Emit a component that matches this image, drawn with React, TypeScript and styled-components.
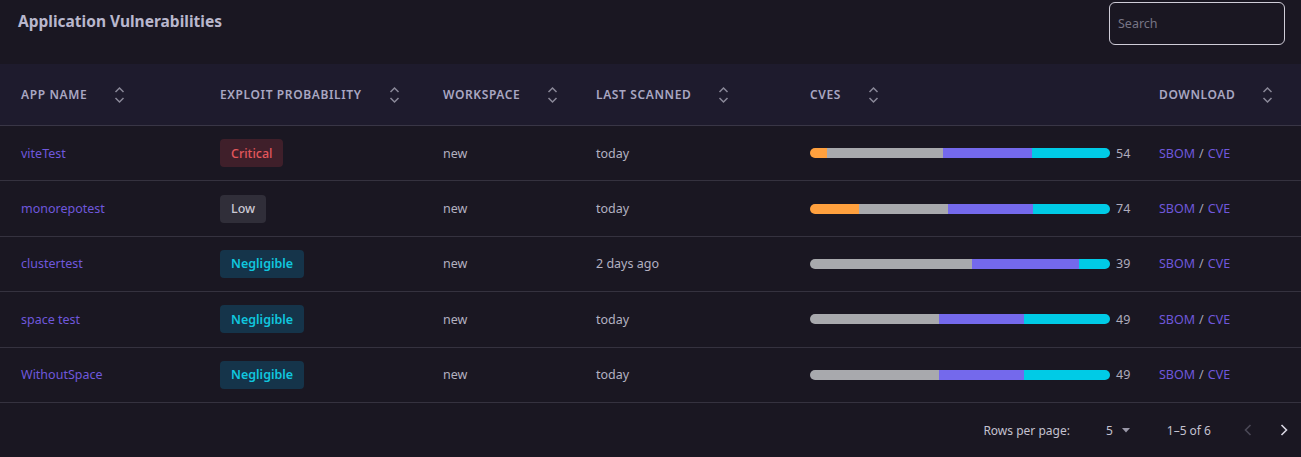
import React from "react";
import styled, { createGlobalStyle } from "styled-components";

const GlobalStyle = createGlobalStyle`
  html, body { margin: 0; padding: 0; background: #1a1722; }
  body { font-family: "Noto Sans", "Open Sans", sans-serif; -webkit-font-smoothing: antialiased; }
  * { box-sizing: border-box; }
`;

const Page = styled.div`
  width: 1301px;
  height: 457px;
  background: #1a1722;
  color: #b7b5c6;
  overflow: hidden;
`;

const TopBar = styled.div`
  height: 64px;
  display: flex;
  justify-content: space-between;
  align-items: flex-start;
  padding: 0 16px 0 18px;
`;

const Title = styled.h2`
  margin: 0;
  padding-top: 10px;
  font-size: 15.5px;
  font-weight: 700;
  color: #b9b7cd;
  letter-spacing: 0;
`;

const SearchInput = styled.input`
  margin-top: 2px;
  width: 176px;
  height: 43px;
  background: transparent;
  border: 1px solid #cfcdd8;
  border-radius: 6px;
  padding: 0 8px;
  font-family: "Noto Sans", sans-serif;
  font-size: 12.5px;
  color: #d0cedc;
  outline: none;
  &::placeholder { color: #777585; }
`;

const cols = "199px 223px 153px 214px 349px 1fr";

const HeadRow = styled.div`
  display: grid;
  grid-template-columns: ${cols};
  height: 62px;
  background: #1e1b2d;
  border-bottom: 1px solid #393646;
  align-items: center;
`;

const HeadCell = styled.div`
  display: flex;
  align-items: center;
  gap: 27px;
  padding-left: 21px;
  font-size: 12px;
  font-weight: 600;
  letter-spacing: 0.62px;
  color: #a9a7c2;
  text-transform: uppercase;
`;

const Row = styled.div`
  display: grid;
  grid-template-columns: ${cols};
  height: 55.4px;
  border-bottom: 1px solid #35323f;
  align-items: center;
`;

const Cell = styled.div`
  padding-left: 21px;
  font-size: 12.5px;
  color: #b3b1c1;
  display: flex;
  align-items: center;
`;

const AppLink = styled.span`
  color: #6f58dc;
`;

const badgeColors: Record<string, { bg: string; fg: string; weight: number }> = {
  Critical: { bg: "#3f1f2a", fg: "#e2575c", weight: 500 },
  Low: { bg: "#302e39", fg: "#cac8d3", weight: 500 },
  Negligible: { bg: "#15344a", fg: "#10c6df", weight: 600 },
};

const Badge = styled.span<{ $bg: string; $fg: string; $w: number }>`
  display: inline-flex;
  align-items: center;
  height: 28px;
  padding: 0 11px;
  border-radius: 4px;
  background: ${(p) => p.$bg};
  color: ${(p) => p.$fg};
  font-weight: ${(p) => p.$w};
  font-size: 12.5px;
`;

const BarWrap = styled.div`
  display: flex;
  align-items: center;
  gap: 6px;
`;

const Bar = styled.div`
  display: flex;
  width: 300px;
  height: 10px;
  border-radius: 5px;
  overflow: hidden;
`;

const Seg = styled.div<{ $c: string }>`
  height: 100%;
  background: ${(p) => p.$c};
`;

const Count = styled.span`
  font-size: 12.5px;
  color: #aeacbc;
`;

const Slash = styled.span`
  color: #a7a5b5;
  margin: 0 4px;
`;

const Footer = styled.div`
  height: 55px;
  display: flex;
  justify-content: flex-end;
  align-items: center;
  padding-right: 4px;
  font-size: 12px;
  color: #c4c2d0;
`;

const FooterLabel = styled.span`
  margin-right: 36px;
`;

const Select = styled.div`
  display: flex;
  align-items: center;
  gap: 9px;
  margin-right: 37px;
`;

const Range = styled.span`
  margin-right: 14px;
`;

const NavBtn = styled.div<{ $dim?: boolean }>`
  width: 26px;
  display: flex;
  justify-content: center;
  margin-left: 10px;
  color: ${(p) => (p.$dim ? "#4a4856" : "#d8d6e2")};
`;

const SortIcon = () => (
  <svg width="11" height="18" viewBox="0 0 11 18" fill="none" stroke="#8a8898" strokeWidth="1.5">
    <path d="M1.5 6 L5.5 2 L9.5 6" />
    <path d="M1.5 12 L5.5 16 L9.5 12" />
  </svg>
);

const COLORS = { orange: "#ffa03e", gray: "#a8a9ad", purple: "#7469ec", cyan: "#00cbe6" };

type RowData = {
  name: string;
  prob: "Critical" | "Low" | "Negligible";
  ws: string;
  scanned: string;
  cves: [number, number, number, number];
};

const rows: RowData[] = [
  { name: "viteTest", prob: "Critical", ws: "new", scanned: "today", cves: [3, 21, 16, 14] },
  { name: "monorepotest", prob: "Low", ws: "new", scanned: "today", cves: [12, 22, 21, 19] },
  { name: "clustertest", prob: "Negligible", ws: "new", scanned: "2 days ago", cves: [0, 21, 14, 4] },
  { name: "space test", prob: "Negligible", ws: "new", scanned: "today", cves: [0, 21, 14, 14] },
  { name: "WithoutSpace", prob: "Negligible", ws: "new", scanned: "today", cves: [0, 21, 14, 14] },
];

const heads = ["App Name", "Exploit Probability", "Workspace", "Last Scanned", "CVEs", "Download"];

export default function App() {
  return (
    <Page>
      <GlobalStyle />
      <TopBar>
        <Title>Application Vulnerabilities</Title>
        <SearchInput placeholder="Search" />
      </TopBar>
      <HeadRow>
        {heads.map((h) => (
          <HeadCell key={h}>
            <span>{h}</span>
            <SortIcon />
          </HeadCell>
        ))}
      </HeadRow>
      {rows.map((r) => {
        const total = r.cves.reduce((a, b) => a + b, 0);
        const b = badgeColors[r.prob];
        const segColors = [COLORS.orange, COLORS.gray, COLORS.purple, COLORS.cyan];
        return (
          <Row key={r.name}>
            <Cell>
              <AppLink>{r.name}</AppLink>
            </Cell>
            <Cell>
              <Badge $bg={b.bg} $fg={b.fg} $w={b.weight}>
                {r.prob}
              </Badge>
            </Cell>
            <Cell>{r.ws}</Cell>
            <Cell>{r.scanned}</Cell>
            <Cell>
              <BarWrap>
                <Bar>
                  {r.cves.map((v, i) =>
                    v > 0 ? <Seg key={i} $c={segColors[i]} style={{ width: `${(v / total) * 100}%` }} /> : null
                  )}
                </Bar>
                <Count>{total}</Count>
              </BarWrap>
            </Cell>
            <Cell>
              <AppLink>SBOM</AppLink>
              <Slash>/</Slash>
              <AppLink>CVE</AppLink>
            </Cell>
          </Row>
        );
      })}
      <Footer>
        <FooterLabel>Rows per page:</FooterLabel>
        <Select>
          <span>5</span>
          <svg width="8" height="5" viewBox="0 0 8 5">
            <path d="M0 0 L8 0 L4 4.5 Z" fill="#9a98a8" />
          </svg>
        </Select>
        <Range>1–5 of 6</Range>
        <NavBtn $dim>
          <svg width="8" height="12" viewBox="0 0 8 12" fill="none" stroke="currentColor" strokeWidth="1.6">
            <path d="M6.5 1 L1.5 6 L6.5 11" />
          </svg>
        </NavBtn>
        <NavBtn>
          <svg width="8" height="12" viewBox="0 0 8 12" fill="none" stroke="currentColor" strokeWidth="1.6">
            <path d="M1.5 1 L6.5 6 L1.5 11" />
          </svg>
        </NavBtn>
      </Footer>
    </Page>
  );
}
